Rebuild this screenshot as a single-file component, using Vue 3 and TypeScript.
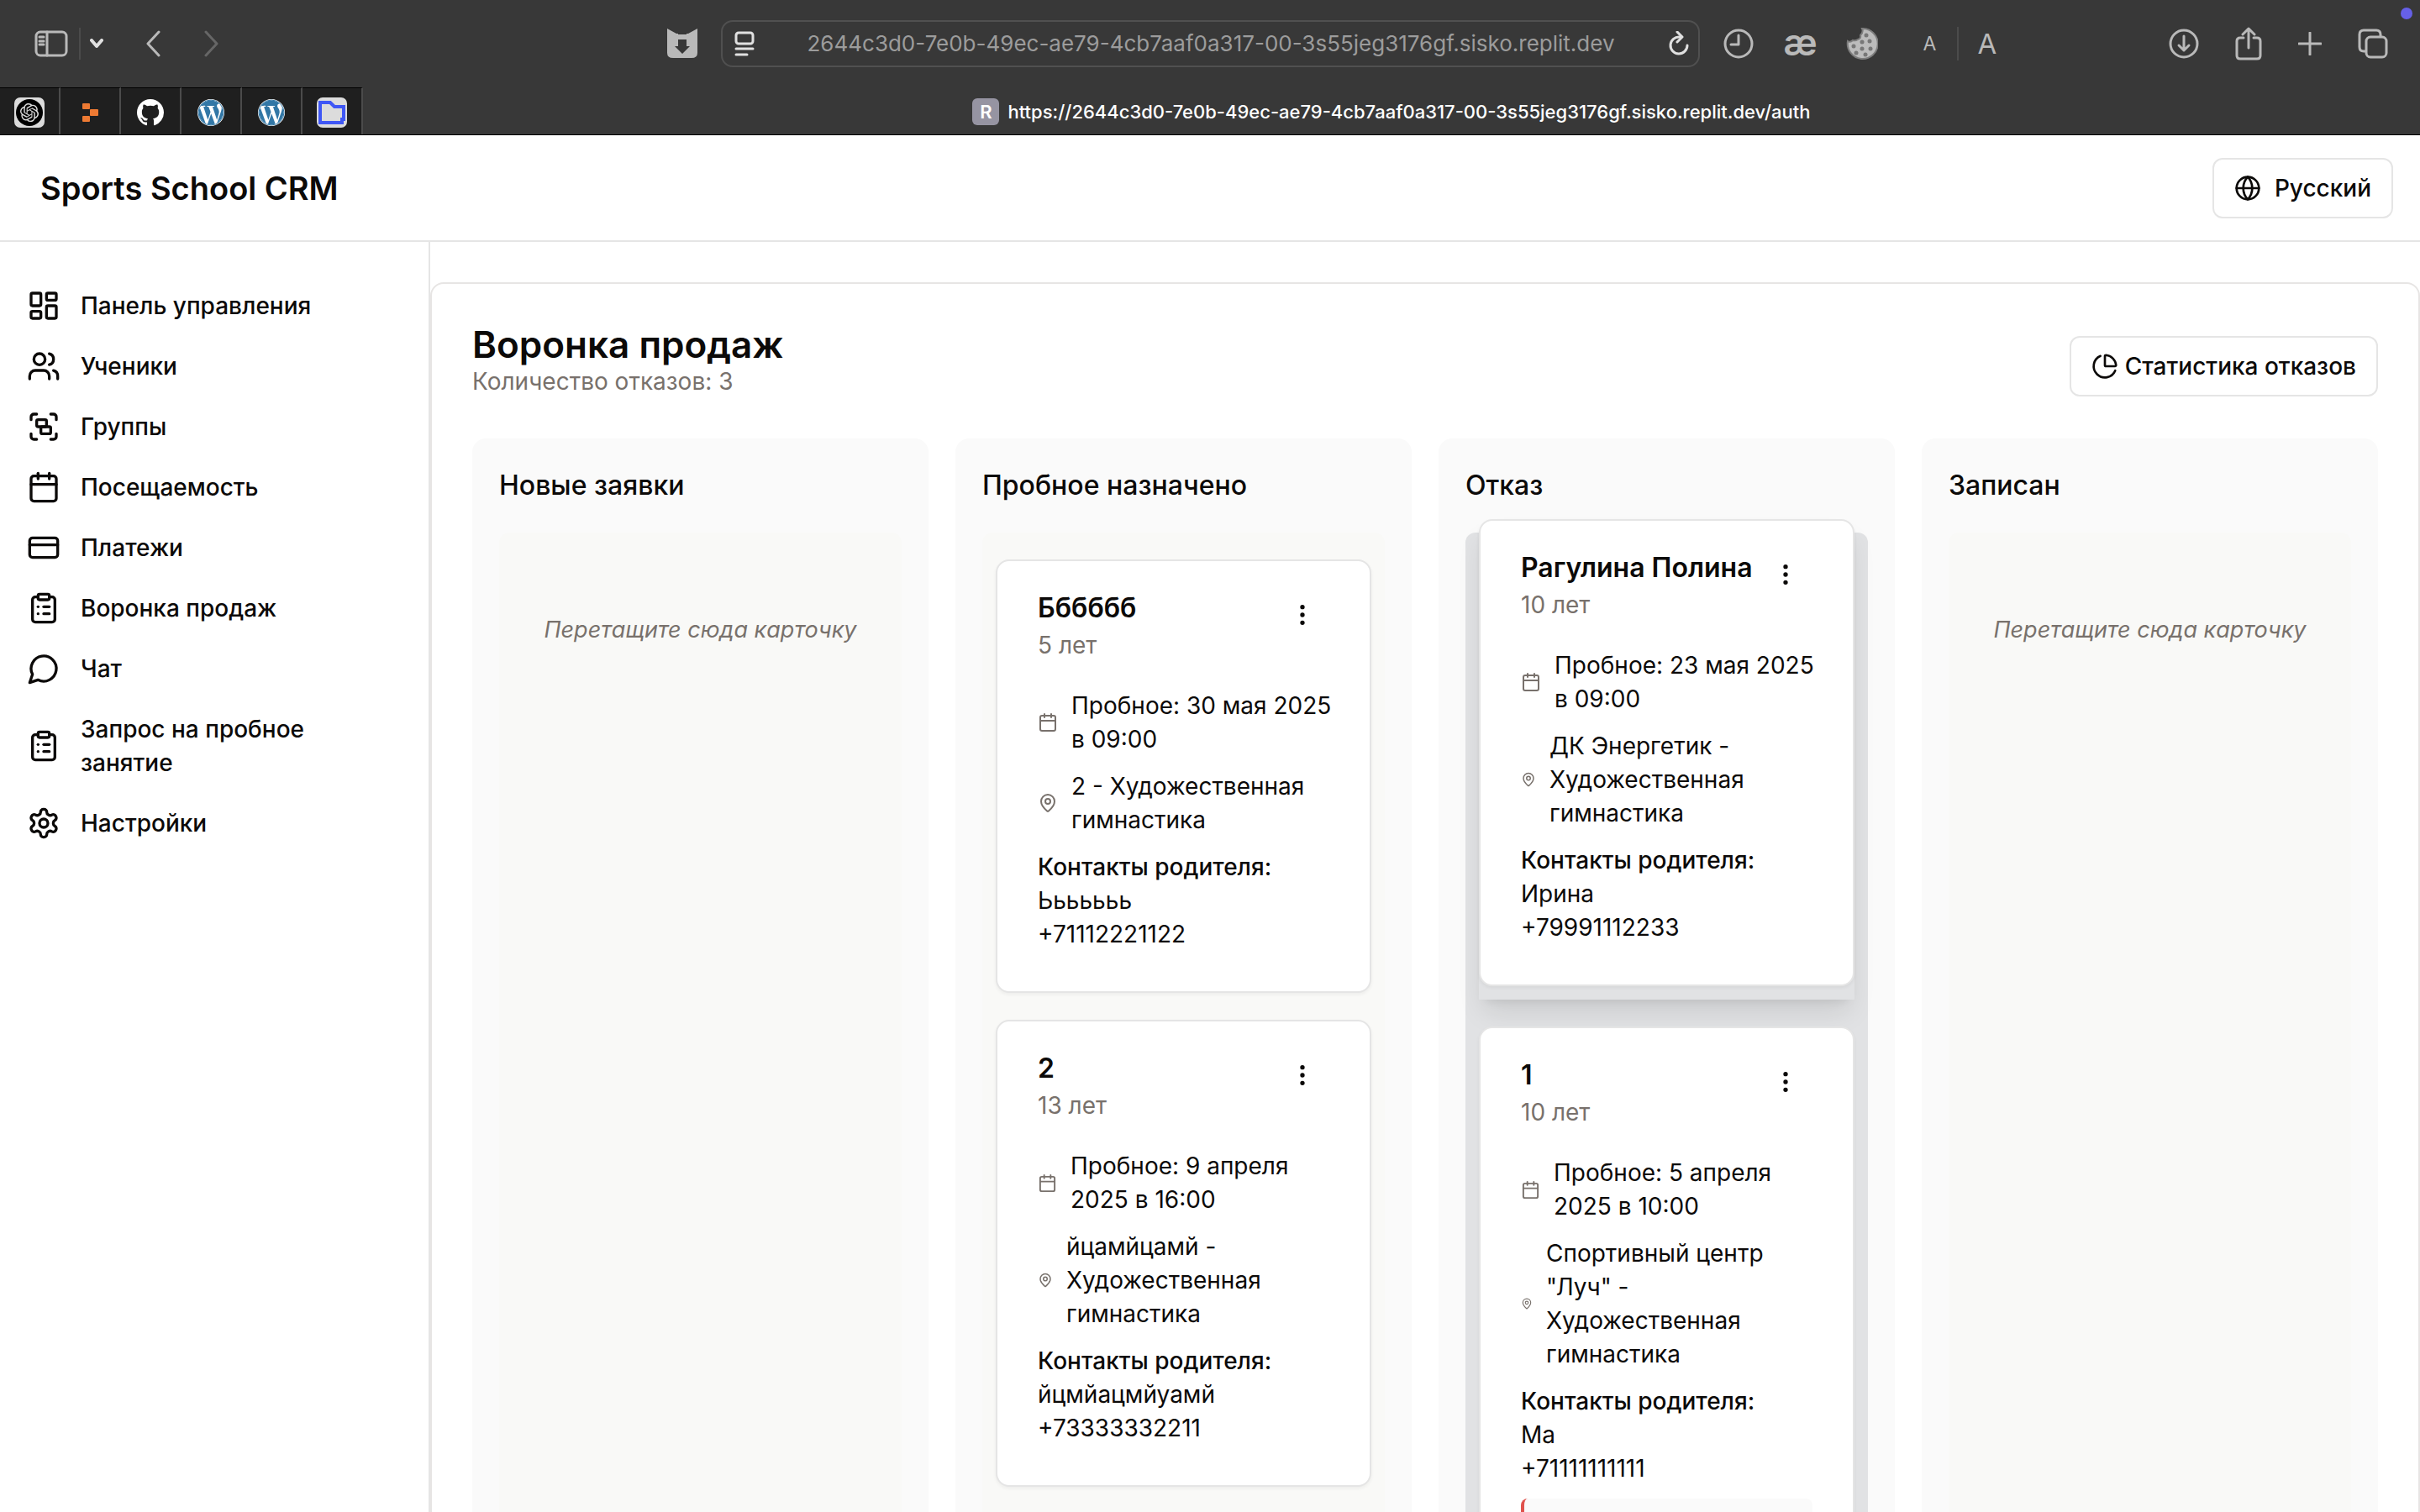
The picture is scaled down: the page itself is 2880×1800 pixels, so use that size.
<script setup lang="ts">
interface NavItem {
  label: string
  icon: string
}

interface Lead {
  name: string
  age: string
  trial: string
  trialIcon: number
  place: string
  placeIcon: number
  parent: string
  phone: string
  dragging?: boolean
  rejected?: boolean
}

interface Stage {
  title: string
  active?: boolean
  leads: Lead[]
}

const icons: Record<string, string> = {
  dashboard:
    '<rect width="7" height="9" x="3" y="3" rx="1"/><rect width="7" height="5" x="14" y="3" rx="1"/><rect width="7" height="9" x="14" y="12" rx="1"/><rect width="7" height="5" x="3" y="16" rx="1"/>',
  users:
    '<path d="M16 21v-2a4 4 0 0 0-4-4H6a4 4 0 0 0-4 4v2"/><circle cx="9" cy="7" r="4"/><path d="M22 21v-2a4 4 0 0 0-3-3.87"/><path d="M16 3.13a4 4 0 0 1 0 7.75"/>',
  group:
    '<path d="M3 7V5c0-1.1.9-2 2-2h2"/><path d="M17 3h2c1.1 0 2 .9 2 2v2"/><path d="M21 17v2c0 1.1-.9 2-2 2h-2"/><path d="M7 21H5c-1.1 0-2-.9-2-2v-2"/><rect width="7" height="5" x="7" y="7" rx="1"/><rect width="7" height="5" x="10" y="12" rx="1"/>',
  calendar: '<path d="M8 2v4"/><path d="M16 2v4"/><rect width="18" height="18" x="3" y="4" rx="2"/><path d="M3 10h18"/>',
  card: '<rect width="20" height="14" x="2" y="5" rx="2"/><path d="M2 10h20"/>',
  clipboard:
    '<rect width="8" height="4" x="8" y="2" rx="1"/><path d="M16 4h2a2 2 0 0 1 2 2v14a2 2 0 0 1-2 2H6a2 2 0 0 1-2-2V6a2 2 0 0 1 2-2h2"/><path d="M12 11h4"/><path d="M12 16h4"/><path d="M8 11h.01"/><path d="M8 16h.01"/>',
  chat: '<path d="M7.9 20A9 9 0 1 0 4 16.1L2 22Z"/>',
  settings:
    '<path d="M12.22 2h-.44a2 2 0 0 0-2 2v.18a2 2 0 0 1-1 1.73l-.43.25a2 2 0 0 1-2 0l-.15-.08a2 2 0 0 0-2.73.73l-.22.38a2 2 0 0 0 .73 2.73l.15.1a2 2 0 0 1 1 1.72v.51a2 2 0 0 1-1 1.74l-.15.09a2 2 0 0 0-.73 2.73l.22.38a2 2 0 0 0 2.73.73l.15-.08a2 2 0 0 1 2 0l.43.25a2 2 0 0 1 1 1.73V20a2 2 0 0 0 2 2h.44a2 2 0 0 0 2-2v-.18a2 2 0 0 1 1-1.73l.43-.25a2 2 0 0 1 2 0l.15.08a2 2 0 0 0 2.73-.73l.22-.39a2 2 0 0 0-.73-2.73l-.15-.08a2 2 0 0 1-1-1.74v-.5a2 2 0 0 1 1-1.74l.15-.09a2 2 0 0 0 .73-2.73l-.22-.38a2 2 0 0 0-2.73-.73l-.15.08a2 2 0 0 1-2 0l-.43-.25a2 2 0 0 1-1-1.73V4a2 2 0 0 0-2-2z"/><circle cx="12" cy="12" r="3"/>',
  pin: '<path d="M20 10c0 4.993-5.539 10.193-7.399 11.799a1 1 0 0 1-1.202 0C9.539 20.193 4 14.993 4 10a8 8 0 0 1 16 0"/><circle cx="12" cy="10" r="3"/>',
  dots: '<circle cx="12" cy="12" r="1"/><circle cx="12" cy="5" r="1"/><circle cx="12" cy="19" r="1"/>',
  globe: '<circle cx="12" cy="12" r="10"/><path d="M12 2a14.5 14.5 0 0 0 0 20 14.5 14.5 0 0 0 0-20"/><path d="M2 12h20"/>',
  pie: '<path d="M21 12c.552 0 1.005-.449.95-.998a10 10 0 0 0-8.953-8.951c-.55-.055-.998.398-.998.95v8a1 1 0 0 0 1 1z"/><path d="M21.21 15.89A10 10 0 1 1 8 2.83"/>',
}

const pinnedTabs: { name: string; art: string }[] = [
  {
    name: 'ChatGPT',
    art: '<rect width="36" height="36" rx="7" fill="#dcdcdc"/><circle cx="18" cy="18" r="16" fill="#000"/><g transform="translate(7 7) scale(.92)"><path fill="#dcdcdc" d="M22.2819 9.8211a5.9847 5.9847 0 0 0-.5157-4.9108 6.0462 6.0462 0 0 0-6.5098-2.9A6.0651 6.0651 0 0 0 4.9807 4.1818a5.9847 5.9847 0 0 0-3.9977 2.9 6.0462 6.0462 0 0 0 .7427 7.0966 5.98 5.98 0 0 0 .511 4.9107 6.051 6.051 0 0 0 6.5146 2.9001A5.9847 5.9847 0 0 0 13.2599 24a6.0557 6.0557 0 0 0 5.7718-4.2058 5.9894 5.9894 0 0 0 3.9977-2.9001 6.0557 6.0557 0 0 0-.7475-7.0729zm-9.022 12.6081a4.4755 4.4755 0 0 1-2.8764-1.0408l.1419-.0804 4.7783-2.7582a.7948.7948 0 0 0 .3927-.6813v-6.7369l2.02 1.1686a.071.071 0 0 1 .038.052v5.5826a4.504 4.504 0 0 1-4.4945 4.4944zm-9.6607-4.1254a4.4708 4.4708 0 0 1-.5346-3.0137l.142.0852 4.783 2.7582a.7712.7712 0 0 0 .7806 0l5.8428-3.3685v2.3324a.0804.0804 0 0 1-.0332.0615L9.74 19.9502a4.4992 4.4992 0 0 1-6.1408-1.6464zM2.3408 7.8956a4.485 4.485 0 0 1 2.3655-1.9728V11.6a.7664.7664 0 0 0 .3879.6765l5.8144 3.3543-2.0201 1.1685a.0757.0757 0 0 1-.071 0l-4.8303-2.7865A4.504 4.504 0 0 1 2.3408 7.872zm16.5963 3.8558L13.1038 8.364 15.1192 7.2a.0757.0757 0 0 1 .071 0l4.8303 2.7913a4.4944 4.4944 0 0 1-.6765 8.1042v-5.6772a.79.79 0 0 0-.407-.667zm2.0107-3.0231l-.142-.0852-4.7735-2.7818a.7759.7759 0 0 0-.7854 0L9.409 9.2297V6.8974a.0662.0662 0 0 1 .0284-.0615l4.8303-2.7866a4.4992 4.4992 0 0 1 6.6802 4.66zM8.3065 12.863l-2.02-1.1638a.0804.0804 0 0 1-.038-.0567V6.0742a4.4992 4.4992 0 0 1 7.3757-3.4537l-.142.0805L8.704 5.459a.7948.7948 0 0 0-.3927.6813zm1.0976-2.3654l2.602-1.4998 2.6069 1.4998v2.9994l-2.5974 1.4997-2.6067-1.4997Z"/></g>',
  },
  {
    name: 'Replit',
    art: '<g fill="#ed7a33"><rect x="9" y="7" width="9" height="7" rx="1"/><rect x="18" y="14" width="10" height="8" rx="1"/><rect x="9" y="22" width="9" height="7" rx="1"/></g>',
  },
  {
    name: 'GitHub',
    art: '<g transform="translate(2 2) scale(2)"><path fill="#fff" d="M8 0C3.58 0 0 3.58 0 8c0 3.54 2.29 6.53 5.47 7.59.4.07.55-.17.55-.38 0-.19-.01-.82-.01-1.49-2.01.37-2.53-.49-2.69-.94-.09-.23-.48-.94-.82-1.13-.28-.15-.68-.52-.01-.53.63-.01 1.08.58 1.23.82.72 1.21 1.87.87 2.33.66.07-.52.28-.87.51-1.07-1.78-.2-3.64-.89-3.64-3.95 0-.87.31-1.59.82-2.15-.08-.2-.36-1.02.08-2.12 0 0 .67-.21 2.2.82.64-.18 1.32-.27 2-.27s1.36.09 2 .27c1.53-1.04 2.2-.82 2.2-.82.44 1.1.16 1.92.08 2.12.51.56.82 1.27.82 2.15 0 3.07-1.87 3.75-3.65 3.95.29.25.54.73.54 1.48 0 1.07-.01 1.93-.01 2.2 0 .21.15.46.55.38A8.01 8.01 0 0 0 16 8c0-4.42-3.58-8-8-8z"/></g>',
  },
  ...['WordPress', 'WordPress 2'].map((name) => ({
    name,
    art: '<circle cx="18" cy="18" r="16" fill="#fff"/><circle cx="18" cy="18" r="15" fill="none" stroke="#3277a6"/><g transform="translate(2 2) scale(1.3333)"><path fill="#3277a6" d="M21.469 6.825c.84 1.537 1.318 3.3 1.318 5.175 0 3.979-2.156 7.456-5.363 9.325l3.295-9.527c.615-1.54.82-2.771.82-3.864 0-.405-.026-.78-.07-1.11m-7.981.105c.647-.03 1.232-.105 1.232-.105.582-.075.514-.93-.067-.899 0 0-1.755.135-2.88.135-1.064 0-2.85-.15-2.85-.15-.585-.03-.661.855-.075.885 0 0 .54.061 1.125.09l1.68 4.605-2.37 7.08L5.354 6.9c.649-.03 1.234-.1 1.234-.1.585-.075.516-.93-.065-.896 0 0-1.746.138-2.874.138-.2 0-.438-.008-.69-.015C4.911 3.15 8.235 1.215 12 1.215c2.809 0 5.365 1.072 7.286 2.833-.046-.003-.091-.009-.141-.009-1.06 0-1.812.923-1.812 1.914 0 .89.513 1.643 1.06 2.531.411.72.89 1.643.89 2.977 0 .915-.354 1.994-.821 3.479l-1.075 3.585-3.9-11.61.001.014zM12 22.784c-1.059 0-2.081-.153-3.048-.437l3.237-9.406 3.315 9.087c.024.053.05.101.078.149-1.12.393-2.325.609-3.582.609M1.211 12c0-1.564.336-3.05.935-4.39L7.29 21.709C3.694 19.96 1.212 16.271 1.211 12"/></g>',
  })),
  {
    name: 'Files',
    art: '<rect width="36" height="36" rx="7" fill="#dcdcdc"/><path fill="none" stroke="#3f57f5" stroke-width="4" d="M4 6h12l5 5h11v15h-2v4H4z"/>',
  },
]

const nav: NavItem[] = [
  { label: 'Панель управления', icon: 'dashboard' },
  { label: 'Ученики', icon: 'users' },
  { label: 'Группы', icon: 'group' },
  { label: 'Посещаемость', icon: 'calendar' },
  { label: 'Платежи', icon: 'card' },
  { label: 'Воронка продаж', icon: 'clipboard' },
  { label: 'Чат', icon: 'chat' },
  { label: 'Запрос на пробное занятие', icon: 'clipboard' },
  { label: 'Настройки', icon: 'settings' },
]

const stages: Stage[] = [
  { title: 'Новые заявки', leads: [] },
  {
    title: 'Пробное назначено',
    leads: [
      {
        name: 'Бббббб',
        age: '5 лет',
        trial: 'Пробное: 30 мая 2025\nв 09:00',
        trialIcon: 24,
        place: '2 - Художественная\nгимнастика',
        placeIcon: 24,
        parent: 'Ььььььь',
        phone: '+71112221122',
      },
      {
        name: '2',
        age: '13 лет',
        trial: 'Пробное: 9 апреля\n2025 в 16:00',
        trialIcon: 23,
        place: 'йцамйцамй -\nХудожественная\nгимнастика',
        placeIcon: 18,
        parent: 'йцмйацмйуамй',
        phone: '+73333332211',
      },
    ],
  },
  {
    title: 'Отказ',
    active: true,
    leads: [
      {
        name: 'Рагулина Полина',
        age: '10 лет',
        trial: 'Пробное: 23 мая 2025\nв 09:00',
        trialIcon: 24,
        place: 'ДК Энергетик -\nХудожественная\nгимнастика',
        placeIcon: 18,
        parent: 'Ирина',
        phone: '+79991112233',
        dragging: true,
      },
      {
        name: '1',
        age: '10 лет',
        trial: 'Пробное: 5 апреля\n2025 в 10:00',
        trialIcon: 23,
        place: 'Спортивный центр\n"Луч" -\nХудожественная\nгимнастика',
        placeIcon: 14,
        parent: 'Ма',
        phone: '+71111111111',
        rejected: true,
      },
    ],
  },
  { title: 'Записан', leads: [] },
]
</script>

<template>
  <div class="window">
    <div class="chrome">
      <div class="toolbar">
        <div class="tools tools-left">
          <button class="tool" aria-label="Sidebar">
            <svg width="40" height="34" viewBox="0 0 40 34" class="line">
              <rect x="2" y="3" width="36" height="28" rx="5" />
              <path d="M15 3v28M6 9h5M6 14h5M6 18h5" />
            </svg>
          </button>
          <span class="divider"></span>
          <button class="tool" aria-label="Tab groups">
            <svg width="16" height="12" viewBox="0 0 16 12" class="line strong"><path d="M2 2l6 7 6-7" /></svg>
          </button>
          <button class="tool nav-back" aria-label="Back">
            <svg width="18" height="32" viewBox="0 0 18 32" class="line"><path d="M16 2L3 16l13 14" /></svg>
          </button>
          <button class="tool nav-forward" aria-label="Forward" disabled>
            <svg width="18" height="32" viewBox="0 0 18 32" class="line"><path d="M2 2l13 14L2 30" /></svg>
          </button>
          <button class="tool tool-last" aria-label="Downloader">
            <svg width="36" height="36" viewBox="0 0 36 36">
              <path fill="#b9b9b9" d="M0 0l11 6h14l11-6v29q0 6-7 6H7q-7 0-7-6z" />
              <path fill="#383838" d="M13 4h10v3H13zM13 13h10v8h4l-9 9-9-9h4z" />
            </svg>
          </button>
        </div>
        <div class="address">
          <button class="tool" aria-label="Reader">
            <svg width="24" height="30" viewBox="0 0 24 30" class="line light">
              <rect x="2" y="2" width="20" height="13" rx="3" />
              <path d="M2 21h20M2 28h13" />
            </svg>
          </button>
          <input class="url" aria-label="Address" value="2644c3d0-7e0b-49ec-ae79-4cb7aaf0a317-00-3s55jeg3176gf.sisko.replit.dev" />
          <button class="tool" aria-label="Reload">
            <svg width="26" height="30" viewBox="0 0 26 30" class="line light">
              <path d="M14 7a10 10 0 1 0 9 10" />
              <path d="M11 1l6 6-6 6" />
            </svg>
          </button>
        </div>
        <div class="tools tools-right">
          <button class="tool" aria-label="History">
            <svg width="36" height="36" viewBox="0 0 36 36" class="line"><circle cx="18" cy="18" r="16" /><path d="M18 8v11H9" /></svg>
          </button>
          <button class="tool ligature">æ</button>
          <button class="tool cookie" aria-label="Cookies">
            <svg width="38" height="38" viewBox="0 0 38 38">
              <path fill="#bcbcbc" stroke="#7d7d7d" stroke-width="2" d="M19 1a18 18 0 1 1-17 15q3 2 6-1 3 1 6-1 4-1 3-5 4-4 2-8z" />
              <g fill="#777">
                <circle cx="24" cy="9" r="2.5" /><circle cx="19" cy="17" r="2.5" /><circle cx="28" cy="16" r="2.5" />
                <circle cx="9" cy="22" r="2.5" /><circle cx="19" cy="25" r="2.5" /><circle cx="29" cy="25" r="2.5" />
                <circle cx="12" cy="30" r="2.5" /><circle cx="23" cy="32" r="2.5" />
              </g>
            </svg>
          </button>
          <button class="tool font-small">A</button>
          <span class="divider"></span>
          <button class="tool font-large">A</button>
          <div class="actions">
            <button class="tool" aria-label="Downloads">
              <svg width="36" height="36" viewBox="0 0 36 36" class="line"><circle cx="18" cy="18" r="16" /><path d="M18 9v17M12 20l6 6 6-6" /></svg>
            </button>
            <button class="tool" aria-label="Share">
              <svg width="32" height="40" viewBox="0 0 32 40" class="line"><path d="M10 13H6q-4 0-4 4v17q0 4 4 4h20q4 0 4-4V17q0-4-4-4h-4M16 25V2M9 9l7-7 7 7" /></svg>
            </button>
            <button class="tool" aria-label="New tab">
              <svg width="28" height="28" viewBox="0 0 28 28" class="line"><path d="M14 1v26M1 14h26" /></svg>
            </button>
            <button class="tool" aria-label="Tab overview">
              <svg width="36" height="36" viewBox="0 0 36 36" class="line"><rect x="10" y="10" width="24" height="24" rx="5" /><path d="M9 27H7q-5 0-5-5V7q0-5 5-5h15q5 0 5 5v2" /></svg>
            </button>
          </div>
        </div>
        <span class="notice"></span>
      </div>
      <div class="tabs">
        <button v-for="tab in pinnedTabs" :key="tab.name" class="pinned" :aria-label="tab.name">
          <svg width="36" height="36" viewBox="0 0 36 36" v-html="tab.art"></svg>
        </button>
        <div class="current">
          <span class="badge">R</span>
          <span>https://2644c3d0-7e0b-49ec-ae79-4cb7aaf0a317-00-3s55jeg3176gf.sisko.replit.dev/auth</span>
        </div>
      </div>
    </div>

    <header class="top">
      <h1>Sports School CRM</h1>
      <button class="outline language">
        <svg width="32" height="32" viewBox="0 0 24 24" class="icon" v-html="icons.globe"></svg>
        Русский
      </button>
    </header>

    <div class="body">
      <nav class="sidebar">
        <a v-for="item in nav" :key="item.label" href="#">
          <svg width="40" height="40" viewBox="0 0 24 24" class="icon" v-html="icons[item.icon]"></svg>
          <span>{{ item.label }}</span>
        </a>
      </nav>

      <main>
        <section class="panel">
          <div class="panel-head">
            <div>
              <h2>Воронка продаж</h2>
              <p>Количество отказов: 3</p>
            </div>
            <button class="outline stats">
              <svg width="32" height="32" viewBox="0 0 24 24" class="icon" v-html="icons.pie"></svg>
              Статистика отказов
            </button>
          </div>

          <div class="board">
            <section v-for="stage in stages" :key="stage.title" class="stage">
              <h3>{{ stage.title }}</h3>
              <div class="zone" :class="{ active: stage.active }">
                <p v-if="!stage.leads.length" class="empty">Перетащите сюда карточку</p>
                <div v-for="lead in stage.leads" :key="lead.name" class="slot" :class="{ dragging: lead.dragging }">
                  <article class="card">
                    <div class="card-head">
                      <div>
                        <h4>{{ lead.name }}</h4>
                        <p>{{ lead.age }}</p>
                      </div>
                      <button class="more" aria-label="Меню">
                        <svg width="32" height="32" viewBox="0 0 24 24" class="icon" v-html="icons.dots"></svg>
                      </button>
                    </div>
                    <div class="row">
                      <svg :width="lead.trialIcon" :height="lead.trialIcon" viewBox="0 0 24 24" class="icon muted" v-html="icons.calendar"></svg>
                      <span>{{ lead.trial }}</span>
                    </div>
                    <div class="row">
                      <svg :width="lead.placeIcon" :height="lead.placeIcon" viewBox="0 0 24 24" class="icon muted" v-html="icons.pin"></svg>
                      <span>{{ lead.place }}</span>
                    </div>
                    <div class="contacts">
                      <strong>Контакты родителя:</strong>
                      <span>{{ lead.parent }}</span>
                      <span>{{ lead.phone }}</span>
                    </div>
                    <div v-if="lead.rejected" class="reason"></div>
                  </article>
                </div>
              </div>
            </section>
          </div>
        </section>
      </main>
    </div>
  </div>
</template>

<style>
body {
  margin: 0;
}
</style>

<style scoped>
.window {
  display: flex;
  flex-direction: column;
  height: 100vh;
  overflow: hidden;
  background: #fff;
  color: #0c0a09;
  font-family: Inter, "Liberation Sans", sans-serif;
  font-size: 28px;
  line-height: 40px;
}

.window *,
.window {
  box-sizing: border-box;
}

h1,
h2,
h3,
h4,
p {
  margin: 0;
}

button,
input {
  margin: 0;
  padding: 0;
  border: 0;
  background: none;
  color: inherit;
  font: inherit;
}

svg {
  display: block;
  flex: none;
}

.icon {
  fill: none;
  stroke: currentColor;
  stroke-width: 2;
  stroke-linecap: round;
  stroke-linejoin: round;
}

/* Browser window */
.chrome {
  flex: none;
  background: #383838;
  color: #b9b9b9;
  border-bottom: 1px solid #000;
}

.toolbar {
  position: relative;
  display: grid;
  grid-template-columns: 1fr 1165px 1fr;
  align-items: center;
  height: 104px;
}

.tools,
.actions {
  display: flex;
  align-items: center;
}

.tool {
  display: flex;
  align-items: center;
  justify-content: center;
}

.line {
  fill: none;
  stroke: #b9b9b9;
  stroke-width: 3;
  stroke-linecap: round;
  stroke-linejoin: round;
}

.line.light {
  stroke: #e0e0e0;
}

.line.strong {
  stroke: #e0e0e0;
  stroke-width: 4;
}

.tools-left {
  padding: 0 28px 0 41px;
}

.divider {
  width: 2px;
  height: 38px;
  background: #4b4b4b;
}

.tools-left .divider {
  margin: 0 11px 0 13px;
}

.nav-back {
  margin-left: 50px;
}

.nav-forward {
  margin-left: 52px;
}

.nav-forward .line {
  stroke: #666;
}

.tool-last {
  margin-left: auto;
}

.address {
  display: flex;
  align-items: center;
  height: 56px;
  padding: 0 10px 0 14px;
  border: 2px solid #505050;
  border-radius: 14px;
}

.url {
  flex: 1;
  min-width: 0;
  color: #9c9c9c;
  font-size: 26px;
  line-height: 40px;
  text-align: center;
  outline: none;
}

.tools-right {
  padding: 0 38px 0 28px;
}

.ligature {
  width: 44px;
  margin-left: 34px;
  padding-bottom: 4px;
  font-size: 44px;
  font-weight: 600;
}

.cookie {
  margin-left: 32px;
}

.font-small {
  margin-left: 54px;
  font-size: 23px;
}

.tools-right .divider {
  height: 40px;
  margin: 0 22px 0 25px;
}

.font-large {
  font-size: 33px;
}

.actions {
  gap: 43px;
  margin-left: auto;
}

.notice {
  position: absolute;
  top: 9px;
  right: 9px;
  width: 14px;
  height: 14px;
  border-radius: 50%;
  background: #6660e8;
}

.tabs {
  display: flex;
  height: 56px;
}

.pinned {
  display: flex;
  align-items: center;
  justify-content: center;
  width: 72px;
  padding-top: 2px;
  border-top: 1px solid #000;
  border-right: 2px solid #4b4b4b;
  background: #1f1f1f;
}

.current {
  flex: 1;
  display: flex;
  align-items: center;
  justify-content: center;
  gap: 10px;
  padding-top: 2px;
  color: #fff;
  font-size: 22px;
  font-weight: 500;
}

.badge {
  width: 32px;
  height: 32px;
  border-radius: 6px;
  background: #9694a2;
  font-weight: 600;
  line-height: 32px;
  text-align: center;
}

/* Application header */
.top {
  flex: none;
  display: flex;
  align-items: center;
  justify-content: space-between;
  height: 127px;
  padding: 0 32px 0 48px;
  border-bottom: 2px solid #e5e5e5;
}

h1 {
  font-size: 38px;
  font-weight: 600;
  line-height: 56px;
}

.outline {
  display: flex;
  align-items: center;
  height: 72px;
  padding: 0 24px;
  border: 2px solid #e5e5e5;
  border-radius: 12px;
  background: #fff;
  font-weight: 500;
}

.language {
  gap: 16px;
}

.stats {
  gap: 8px;
  margin-top: 14px;
}

/* Sidebar */
.body {
  flex: 1 0 auto;
  display: flex;
}

.sidebar {
  flex: none;
  width: 512px;
  padding: 40px 0;
  border-right: 2px solid #e5e5e5;
}

.sidebar a {
  display: flex;
  align-items: center;
  gap: 24px;
  padding: 16px 32px;
  color: inherit;
  font-weight: 500;
  text-decoration: none;
}

/* Funnel */
main {
  flex: 1;
  display: flex;
  min-width: 0;
  padding-top: 48px;
}

.panel {
  flex: 1;
  display: flex;
  flex-direction: column;
  min-width: 0;
  padding: 48px;
  border: 2px solid #e7e5e4;
  border-radius: 16px;
}

.panel-head {
  flex: none;
  display: flex;
  align-items: flex-start;
  justify-content: space-between;
  padding-bottom: 48px;
}

h2 {
  font-size: 44px;
  font-weight: 600;
  line-height: 48px;
}

.panel-head p,
.card-head p {
  color: #78716c;
}

.board {
  flex: 1;
  display: grid;
  grid-template-columns: repeat(4, minmax(0, 1fr));
  gap: 32px;
}

.stage {
  display: flex;
  flex-direction: column;
  padding: 32px;
  border-radius: 16px;
  background: #fafafa;
}

h3 {
  padding-bottom: 32px;
  font-size: 32px;
  font-weight: 500;
  line-height: 48px;
}

.zone {
  flex: 1;
  padding: 32px 16px;
  border-radius: 12px;
  background: #f9f9f7;
}

.zone.active {
  background: #e1e2e4;
}

.empty {
  padding-top: 64px;
  color: #78716c;
  font-size: 27px;
  font-style: italic;
  text-align: center;
}

.slot {
  margin-bottom: 32px;
}

.slot.dragging {
  margin-top: -48px;
  padding-bottom: 16px;
  box-shadow: 0 20px 30px -6px rgba(0, 0, 0, 0.1), 0 8px 12px -8px rgba(0, 0, 0, 0.1);
}

.card {
  padding: 32px 48px 48px;
  border: 2px solid #e5e5e5;
  border-radius: 16px;
  background: #fff;
  box-shadow: 0 2px 4px rgba(0, 0, 0, 0.05);
}

.card-head {
  display: flex;
  align-items: flex-start;
  justify-content: space-between;
  padding-bottom: 32px;
}

h4 {
  font-size: 32px;
  font-weight: 600;
  line-height: 48px;
}

.more {
  display: flex;
  align-items: center;
  justify-content: center;
  width: 64px;
  height: 64px;
}

.row {
  display: flex;
  align-items: center;
  gap: 16px;
  margin-bottom: 16px;
  white-space: pre;
}

.muted {
  color: #78716c;
}

.contacts {
  display: flex;
  flex-direction: column;
}

.contacts strong {
  font-weight: 500;
}

.reason {
  height: 96px;
  margin-top: 16px;
  border-left: 4px solid #e0524d;
  border-radius: 8px;
  background: #fafafa;
}
</style>
